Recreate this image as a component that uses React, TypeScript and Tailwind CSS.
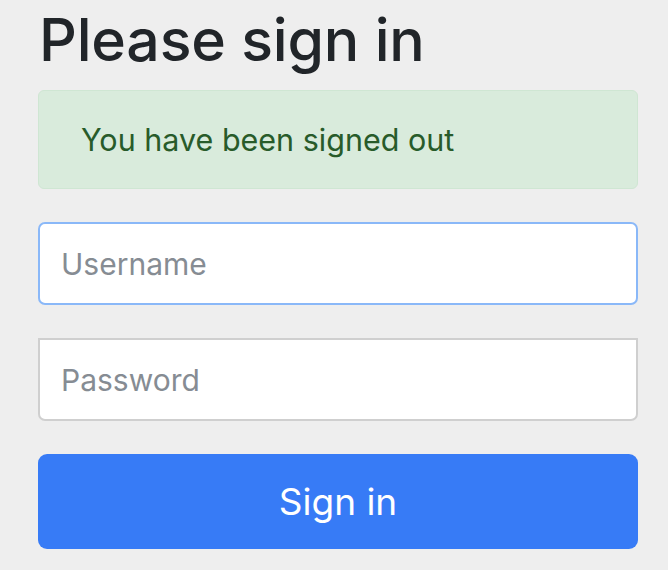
export default function App() {
  return (
    <div className="min-h-[570px] bg-[#eeeeee] font-['Inter','Liberation_Sans',sans-serif]">
      <div className="w-[600px] ml-[38px] pt-[2px]">
        <h1 className="text-[59px] leading-[76px] font-medium text-[#212529] pl-[1px] tracking-[-0.2px]">
          Please sign in
        </h1>

        {/* alert */}
        <div className="mt-[12px] h-[99px] flex items-center rounded-[6px] border border-[#cfe6d3] bg-[#d9ebdc] pl-[42px] text-[30.5px] text-[#285b2a]">
          You have been signed out
        </div>

        <form className="mt-[33px] flex flex-col">
          <input
            type="text"
            placeholder="Username"
            className="h-[83px] w-full rounded-[7px] border-2 border-[#8ab8f8] bg-white px-[21px] text-[30px] text-[#212529] placeholder:text-[#868c93] outline-none"
          />
          <input
            type="password"
            placeholder="Password"
            className="mt-[33px] h-[83px] w-full rounded-b-[7px] border-2 border-[#cfcfcf] bg-white px-[21px] text-[30px] text-[#212529] placeholder:text-[#868c93] outline-none"
          />
          <button
            type="button"
            className="mt-[33px] h-[95px] w-full rounded-[9px] bg-[#377bf6] text-[37px] text-white"
          >
            Sign in
          </button>
        </form>
      </div>
    </div>
  );
}
